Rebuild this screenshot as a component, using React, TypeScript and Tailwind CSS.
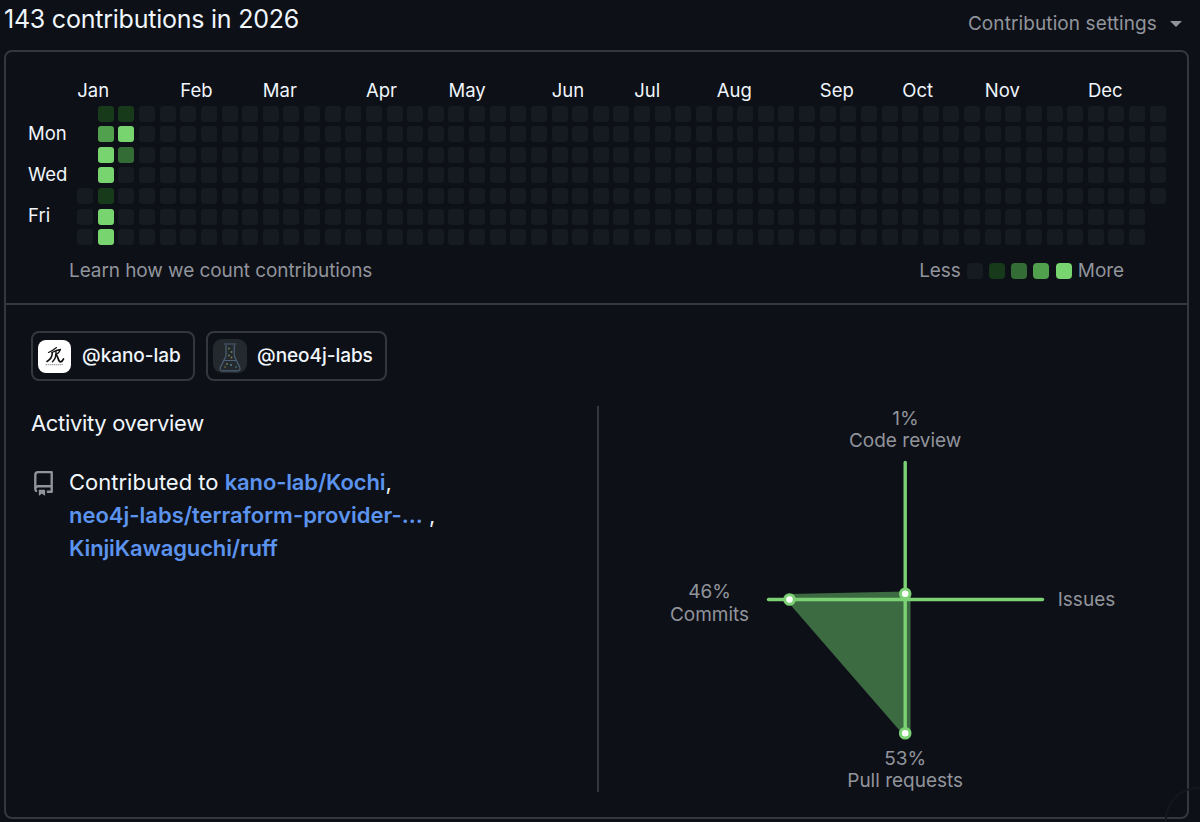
import React from "react";

const MONTHS = [
  { name: "Jan", weeks: 5 },
  { name: "Feb", weeks: 4 },
  { name: "Mar", weeks: 5 },
  { name: "Apr", weeks: 4 },
  { name: "May", weeks: 5 },
  { name: "Jun", weeks: 4 },
  { name: "Jul", weeks: 4 },
  { name: "Aug", weeks: 5 },
  { name: "Sep", weeks: 4 },
  { name: "Oct", weeks: 4 },
  { name: "Nov", weeks: 5 },
  { name: "Dec", weeks: 4 },
];

const LEVELS = ["bg-[#161a21]", "bg-[#173a1b]", "bg-[#336c35]", "bg-[#50a04d]", "bg-[#78d46f]"];

// -1 is a day outside the year
const weekLevels = (week: number): number[] => {
  if (week === 0) return [-1, -1, -1, -1, 0, 0, 0];
  if (week === 1) return [1, 3, 4, 4, 1, 4, 4];
  if (week === 2) return [1, 4, 2, 0, 0, 0, 0];
  if (week === 52) return [0, 0, 0, 0, 0, -1, -1];
  return [0, 0, 0, 0, 0, 0, 0];
};

const Calendar: React.FC = () => (
  <div className="pl-[22px] pt-[26.5px]">
    {/* Month labels */}
    <div className="flex h-[27px] pl-[49.2px] text-[18.5px] leading-[22px]">
      {MONTHS.map((month) => (
        <div key={month.name} className="shrink-0" style={{ width: month.weeks * 20.63 }}>
          {month.name}
        </div>
      ))}
    </div>
    <div className="flex">
      {/* Day labels */}
      <div className="w-[49.2px] pt-[16px] text-[18.5px]">
        {["Mon", "Wed", "Fri"].map((day) => (
          <div key={day} className="h-[41.2px] leading-[22px]">{day}</div>
        ))}
      </div>
      <div className="flex gap-[4.63px]">
        {Array.from({ length: 53 }, (_, week) => (
          <div key={week} className="flex flex-col gap-[4.62px]">
            {weekLevels(week).map((level, day) => (
              <div key={day} className={`size-4 rounded-[3px] ${level < 0 ? "" : LEVELS[level]}`} />
            ))}
          </div>
        ))}
      </div>
    </div>
  </div>
);

const OrgChip: React.FC<{ name: string; className: string; children: React.ReactNode }> = ({ name, className, children }) => (
  <div className={`flex h-[50px] items-center rounded-lg border-2 border-[#34373c] pl-[4px] text-[19px] font-medium tracking-[-0.05px] ${className}`}>
    {children}
    <span className="pl-[9px]">@{name}</span>
  </div>
);

const KanoAvatar = () => (
  <svg width="36" height="36" viewBox="0 0 36 36" fill="none">
    <rect x="1" y="2" width="33" height="33" rx="8" fill="#fff" />
    <g stroke="#111" strokeLinecap="round" strokeLinejoin="round">
      <path d="M19.500 9.500Q16 12.500 11.500 14.500" strokeWidth="1.100" />
      <path d="M15 14.500Q19.500 12 23.500 11.500Q22 15.500 18.500 17.200" strokeWidth="1.300" />
      <path d="M15.200 14.500C15.500 18 13.500 21.500 10 23.500" strokeWidth="1.600" />
      <path d="M19 13.500Q19.500 20 15.500 23.800" strokeWidth="1.400" />
      <path d="M19 17.200C21.500 18 21 24 23.500 23.800Q25.500 23.500 26.500 21" strokeWidth="1.800" />
    </g>
    <path d="M8.500 26.700h18" stroke="#888" strokeWidth=".9" strokeDasharray="1.500 .5" />
  </svg>
);

const FlaskAvatar = () => (
  <svg width="36" height="36" viewBox="0 0 36 36" fill="none">
    <rect x="1" y="1" width="34" height="34" rx="9" fill="#24292e" />
    <path d="M12 6H24.500M14 7v11L8.300 29.500q-.8 3.300 2 3.300h15.500q2.800 0 2-3.300L22.300 18V7M12 22.500h12.500" stroke="#4c6075" strokeWidth="1.200" />
    <g fill="#5e7f55">
      <circle cx="17" cy="10.500" r="1" />
      <circle cx="19.500" cy="14" r="1.100" />
      <circle cx="17" cy="17.500" r="1" />
      <circle cx="15" cy="26" r="1" />
    </g>
    <g fill="#8a7c4c">
      <circle cx="19.500" cy="19.500" r=".9" />
      <circle cx="13" cy="29" r=".8" />
    </g>
    <circle cx="19" cy="27" r="1" fill="#4b8795" />
    <circle cx="24" cy="29" r=".8" fill="#4b8795" />
  </svg>
);

const RepoIcon = () => (
  <svg width="25" height="25" viewBox="0 0 16 16" fill="#91949c">
    <path d="M2 2.500A2.500 2.500 0 0 1 4.500 0h8.750a.75.75 0 0 1 .75.75v12.500a.75.75 0 0 1-.75.75h-2.500a.75.75 0 0 1 0-1.500h1.750v-2h-8a1 1 0 0 0-.714 1.700.75.75 0 1 1-1.072 1.050A2.495 2.495 0 0 1 2 11.500Zm10.500-1h-8a1 1 0 0 0-1 1v6.708A2.486 2.486 0 0 1 4.500 9h8ZM5 12.250a.25.25 0 0 1 .25-.25h3.500a.25.25 0 0 1 .25.25v3.250a.25.25 0 0 1-.4.2l-1.450-1.087a.249.249 0 0 0-.3 0L5.400 15.700a.25.25 0 0 1-.4-.2Z" />
  </svg>
);

const ActivityChart = () => (
  <svg width="560" height="400" viewBox="620 400 560 400" className="font-[Inter,sans-serif]">
    <path d="M789.500 594L905 591.500L910.500 594V736L903.500 735L788 602Z" fill="#3c6b42" />
    <g stroke="#7bd173" strokeWidth="3.400" strokeLinecap="round">
      <path d="M905.200 462.500V733" />
      <path d="M768.500 599.500H1042.500" />
    </g>
    <g fill="#fff" stroke="#7bd173" strokeWidth="3">
      <circle cx="905.200" cy="593.700" r="4.800" />
      <circle cx="789.500" cy="599.500" r="4.800" />
      <circle cx="905.200" cy="733.200" r="4.800" />
    </g>
    <g fill="#91949c" fontSize="19" textAnchor="middle">
      <text x="905.500" y="424.500">1%</text>
      <text x="905.200" y="446.500">Code review</text>
      <text x="709.500" y="598">46%</text>
      <text x="709.500" y="620.500">Commits</text>
      <text x="1086.500" y="605.500">Issues</text>
      <text x="905.200" y="764.500">53%</text>
      <text x="905.200" y="787">Pull requests</text>
    </g>
  </svg>
);

const App: React.FC = () => {
  return (
    <div className="relative flex h-[822px] w-[1200px] flex-col overflow-hidden bg-[#0d1016] pl-1 pr-[11px] font-[Inter,sans-serif] text-[#f0f6fc]">
      {/* Header */}
      <div className="flex h-[50px] shrink-0 justify-between">
        <h2 className="whitespace-nowrap text-[25px] leading-[38px] tracking-[-0.23px]">143 contributions in 2026</h2>
        <div className="flex h-[48px] items-center gap-[13px] pr-[7px] text-[19px] tracking-[0.1px] text-[#91949c]">
          Contribution settings
          <span className="border-x-[6px] border-t-[6px] border-x-transparent border-t-[#91949c]" />
        </div>
      </div>

      <div className="flex h-[769px] shrink-0 flex-col rounded-lg border-2 border-[#34373c]">
        {/* Contribution calendar */}
        <div className="h-[253px] shrink-0 border-b-2 border-[#34373c]">
          <Calendar />
          <div className="flex items-center justify-between px-[63px] pt-[14px] text-[19px] leading-[24px] tracking-[-0.08px] text-[#91949c]">
            <span>Learn how we count contributions</span>
            <div className="flex items-center gap-[6.2px]">
              <span>Less</span>
              {LEVELS.map((level) => (
                <span key={level} className={`-mt-px size-4 rounded ${level}`} />
              ))}
              <span>More</span>
            </div>
          </div>
        </div>

        {/* Activity overview */}
        <div className="flex">
          <div className="w-[591px] pl-[25px] pt-[26px]">
            <div className="flex gap-[11px]">
              <OrgChip name="kano-lab" className="w-[164px]"><KanoAvatar /></OrgChip>
              <OrgChip name="neo4j-labs" className="w-[181px]"><FlaskAvatar /></OrgChip>
            </div>
            <h3 className="pt-[26px] text-[22px] leading-[32px] tracking-[-0.33px]">Activity overview</h3>
            <div className="flex gap-[13px] pt-[26px]">
              <div className="pt-[6px]"><RepoIcon /></div>
              <div className="whitespace-nowrap pt-[0.5px] text-[22px] leading-[33.300px]">
                Contributed to <b className="font-semibold tracking-[-0.15px] text-[#5b93ee]">kano-lab/Kochi</b>,<br />
                <b className="font-semibold text-[#5b93ee]">neo4j-labs/terraform-provider-...</b> ,<br />
                <b className="font-semibold tracking-[-0.15px] text-[#5b93ee]">KinjiKawaguchi/ruff</b>
              </div>
            </div>
          </div>
          <div className="mt-[101px] h-[386px] border-l-2 border-[#34373c] pl-[21px]">
            <div className="-mt-[6px]"><ActivityChart /></div>
          </div>
        </div>
      </div>

      {/* Faint ring in the corner */}
      <svg className="absolute bottom-0 right-0" width="36" height="36" fill="none">
        <circle cx="34" cy="34" r="32" stroke="#14181e" strokeWidth="2" />
      </svg>
    </div>
  );
};

export default App;
